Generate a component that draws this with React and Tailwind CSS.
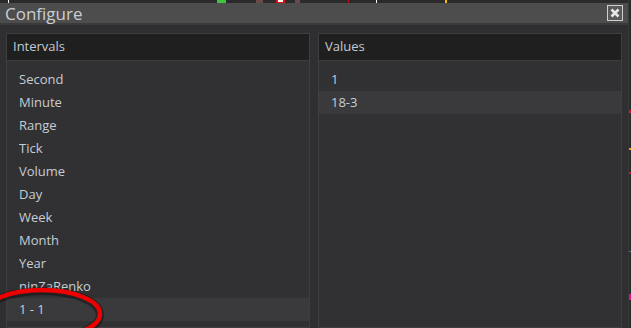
import React from 'react';

const intervals = ['Second', 'Minute', 'Range', 'Tick', 'Volume', 'Day', 'Week', 'Month', 'Year', 'ninZaRenko', '1 - 1'];
const values = ['1', '18-3'];

const Panel = ({ title, items, selected }) => (
  <div className="flex-1 flex flex-col border border-[#3e3e40] bg-[#313133]">
    <div className="h-[27px] shrink-0 flex items-center px-[6px] bg-[#1f1f1f] border-b border-[#3e3e40] text-[13px] text-[#c3cad3]">
      {title}
    </div>
    <div className="pt-[7px] flex flex-col">
      {items.map((item) => (
        <div
          key={item}
          className={`h-[23px] shrink-0 flex items-center px-[12px] text-[13px] text-[#c6ccd4] ${
            item === selected ? 'bg-[#3a3a3c]' : ''
          }`}
        >
          {item}
        </div>
      ))}
    </div>
  </div>
);

// bits of the chart that peek out from behind the dialog
const ChartTop = () => (
  <svg className="absolute left-0 top-0" width="631" height="3">
    <rect x="8" y="0" width="1" height="3" fill="#fff" />
    <rect x="217" y="0" width="9" height="3" fill="#3ec43e" />
    <rect x="256" y="0" width="7" height="3" fill="#6a4a4a" />
    <rect x="276" y="0" width="9" height="3" fill="#e01010" />
    <rect x="278" y="0" width="5" height="2" fill="#fff" />
    <rect x="295" y="0" width="5" height="3" fill="#6a4a4a" />
    <rect x="348" y="0" width="1" height="3" fill="#c01010" />
    <rect x="376" y="0" width="1" height="3" fill="#fff" />
    <rect x="445" y="0" width="2" height="3" fill="#f0c000" />
  </svg>
);

const ChartEdge = () => (
  <svg className="absolute right-0 top-0" width="3" height="328">
    <rect x="0" y="0" width="1" height="328" fill="#3a3a3c" />
    <rect x="1" y="110" width="2" height="3" fill="#e01020" />
    <rect x="1" y="148" width="2" height="2" fill="#f0a000" />
    <rect x="1" y="172" width="2" height="2" fill="#e01020" />
    <rect x="1" y="251" width="2" height="1" fill="#5070a0" />
    <rect x="1" y="294" width="2" height="6" fill="#e01080" />
  </svg>
);

const App = () => {
  return (
    <div
      className="relative w-[631px] h-[328px] overflow-hidden bg-[#2b2b2d] pt-[3px] pr-[3px]"
      style={{ fontFamily: '"Open Sans", "Noto Sans", sans-serif' }}
    >
      <ChartTop />
      <ChartEdge />

      <div className="h-full flex flex-col bg-[#2f2f31]">
        {/* Title bar */}
        <div className="h-[22px] shrink-0 flex items-center justify-between px-[5px] bg-[#4d4d4d] border-b-2 border-[#3a3a3a]">
          <span className="text-[17px] leading-none text-[#c9cdd2]">Configure</span>
          <div className="w-[16px] h-[16px] border border-[#cfcfcf] bg-[#5a5a5a] flex items-center justify-center">
            <svg width="10" height="10" viewBox="0 0 10 10">
              <path d="M1.5 1.5 L8.5 8.5 M8.5 1.5 L1.5 8.5" stroke="#e8e8e8" strokeWidth="2.6" />
            </svg>
          </div>
        </div>

        {/* Panels */}
        <div className="flex-1 flex gap-[8px] pt-[8px] px-[6px]">
          <Panel title="Intervals" items={intervals} selected="1 - 1" />
          <Panel title="Values" items={values} selected="18-3" />
        </div>
      </div>

      {/* red annotation */}
      <svg className="absolute left-0 top-0 pointer-events-none" width="631" height="328">
        <ellipse cx="42" cy="315" rx="58" ry="24" fill="none" stroke="rgba(0,0,0,0.35)" strokeWidth="8" />
        <ellipse cx="42" cy="314" rx="58" ry="24" fill="none" stroke="#ee0000" strokeWidth="4.5" />
      </svg>
    </div>
  );
};

export default App;
